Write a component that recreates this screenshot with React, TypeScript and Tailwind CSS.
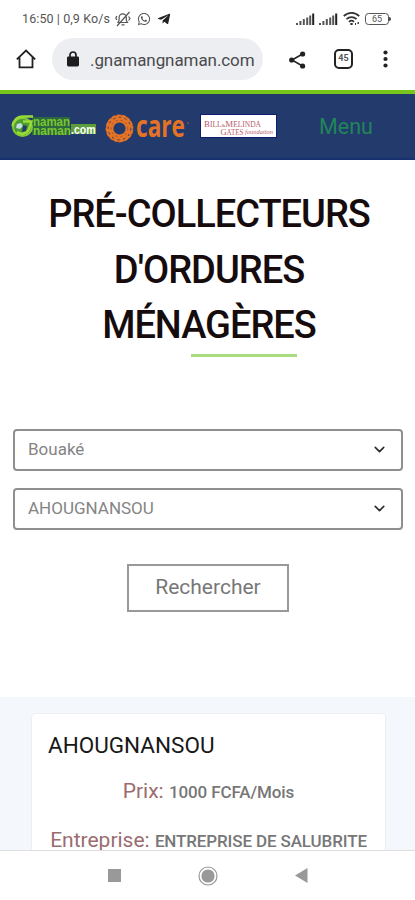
import { ChevronDown } from "lucide-react";
import { FaTelegramPlane, FaWhatsapp } from "react-icons/fa";

function Signal() {
  return (
    <svg width="19" height="13" viewBox="0 0 19 13" fill="#555">
      <rect x="0" y="10" width="2" height="2" />
      <rect x="3.4" y="8" width="2" height="4" />
      <rect x="6.8" y="6" width="2" height="6" />
      <rect x="10.2" y="4.5" width="2" height="7.5" />
      <rect x="13.2" y="2.5" width="2" height="9.5" />
      <rect x="16.2" y="0.5" width="2" height="11.5" fill="#222" />
    </svg>
  );
}

function StatusBar() {
  return (
    <div className="flex h-[38px] items-center pl-[22px] pr-[24px] text-[12.5px] text-[#555]">
      <span className="w-[90px] whitespace-nowrap tracking-[0.1px]">16:50 | 0,9 Ko/s</span>
      <svg className="ml-[3px]" width="17" height="16" viewBox="0 0 17 16" fill="none" stroke="#555" strokeWidth="1.2">
        <path d="M3 11.5h9.5l-1.2-2V6.5a3.6 3.6 0 0 0-7.2 0v3zM6.5 13.8h3M14.5 1 2 15M13.5 5.5l1.5 2-1.5 2M1.8 5 .8 7l1 2" />
      </svg>
      <FaWhatsapp className="ml-[5px]" size={14} />
      <FaTelegramPlane className="ml-[6px]" size={14} color="#222" />
      <div className="ml-auto flex items-center">
        <Signal />
        <span className="w-[4px]" />
        <Signal />
        <svg className="ml-[5px]" width="17" height="14" viewBox="0 0 17 14" fill="none" stroke="#333" strokeWidth="1.8">
          <path d="M.8 4.2C5-.2 12-.2 16.2 4.2M3.5 7.2c2.8-2.8 7.2-2.8 10 0M6 9.8c1.5-1.4 3.5-1.4 5 0" />
          <path d="M7.3 12h2.4M12 12h1M14.5 11h1.4" />
        </svg>
        <div className="ml-[5px] flex h-[12px] w-[24px] items-center justify-center rounded-[3.5px] border border-[#555] text-[9px] leading-none">
          65
        </div>
        <span className="h-[4px] w-[2px] rounded-r-sm bg-[#444]" />
      </div>
    </div>
  );
}

function BrowserBar() {
  return (
    <div className="flex h-[52px] items-start">
      <svg className="ml-[16px] mt-[11px]" width="20" height="20" viewBox="0 0 20 20" fill="none" stroke="#222" strokeWidth="1.8">
        <path d="M.8 10.4 10 1.5l9.2 8.9M3.5 8.4v9.9h13V8.4" />
      </svg>
      <div className="ml-[16px] flex h-[42px] w-[211px] items-center rounded-full bg-[#eceef2] pl-[15px]">
        <svg width="12" height="16" viewBox="0 0 12 16">
          <path d="M3 6V4a3 3 0 0 1 6 0v2" fill="none" stroke="#1d1d1f" strokeWidth="1.7" />
          <rect x="0" y="5.4" width="12" height="10" rx="1.4" fill="#1d1d1f" />
        </svg>
        <span className="ml-[11px] mt-[3px] text-[17px] tracking-[-0.08px] text-[#4a4a4c]">.gnamangnaman.com</span>
      </div>
      <svg className="ml-[26px] mt-[13px]" width="17" height="18" viewBox="0 0 17 18" fill="#222">
        <path d="M13.5 3 3 9l10.5 6" fill="none" stroke="#222" strokeWidth="1.5" />
        <circle cx="13.6" cy="3" r="2.6" />
        <circle cx="2.7" cy="9" r="2.6" />
        <circle cx="13.6" cy="15" r="2.6" />
      </svg>
      <div className="ml-[28px] mt-[11px] flex h-[20px] w-[19px] items-center justify-center rounded-[5px] border-2 border-[#222] text-[9px] font-bold text-[#555]">
        45
      </div>
      <svg className="ml-[30px] mt-[12px]" width="5" height="18" viewBox="0 0 5 18" fill="#222">
        <circle cx="2.5" cy="2.5" r="2.1" />
        <circle cx="2.5" cy="9" r="2.1" />
        <circle cx="2.5" cy="15.5" r="2.1" />
      </svg>
    </div>
  );
}

function GnamanLogo() {
  return (
    <svg className="overflow-visible" width="86" height="24" viewBox="0 0 86 24">
      <rect x="21" y="3" width="38" height="18" fill="#2c6840" />
      <rect x="60" y="10" width="25" height="10" fill="#5c9d3c" />
      <ellipse cx="11.5" cy="13" rx="9.5" ry="9" fill="#4c9c35" stroke="#84cb32" strokeWidth="2" />
      <path d="M22 2.5H12C6 2.5 2 7 1.5 12M12 7.5h8.5L18 15c-2 5-8 6-12 3" fill="none" stroke="#9bdb38" strokeWidth="2.4" />
      <path d="m6 10 4-1 2 3-3 3-4-1z" fill="#c3dde0" />
      <path d="m12 11 4 1-1 5-4 1z" fill="#263a69" />
      <g fontFamily="Liberation Sans" fontWeight="bold" fill="#7bc52f">
        <text x="22" y="11.5" fontSize="13" textLength="37" lengthAdjust="spacingAndGlyphs">naman</text>
        <text x="22" y="20.5" fontSize="13" textLength="38" lengthAdjust="spacingAndGlyphs">naman</text>
        <text x="60" y="19.5" fontSize="12.5" fill="#fff" textLength="24.5" lengthAdjust="spacingAndGlyphs">.com</text>
      </g>
    </svg>
  );
}

function CareLogo() {
  return (
    <svg className="overflow-visible" width="86" height="30" viewBox="0 0 86 30">
      <circle cx="14.5" cy="15.5" r="10" fill="none" stroke="#e57325" strokeWidth="7.8" />
      <circle cx="14.5" cy="15.5" r="11.3" fill="none" stroke="#263966" strokeWidth="0.9" strokeDasharray="2.4 3.4" />
      <circle cx="14.5" cy="15.5" r="8.3" fill="none" stroke="#8a5239" strokeWidth="0.9" strokeDasharray="2 3" />
      <circle cx="14.5" cy="15.5" r="13.8" fill="none" stroke="#263966" strokeWidth="1" strokeDasharray="1.5 4" />
      <text x="31" y="24" fontFamily="Open Sans" fontWeight="bold" fontSize="30" fill="#e57325" textLength="49" lengthAdjust="spacingAndGlyphs">
        care
      </text>
      <circle cx="83" cy="10" r="0.8" fill="#b76335" />
    </svg>
  );
}

function GatesLogo() {
  return (
    <svg width="75" height="22" viewBox="0 0 75 22" fontFamily="Liberation Serif" fill="#b55c6b">
      <rect width="75" height="22" fill="#fff" />
      <text x="3" y="11.5" fontSize="7.6" textLength="57" lengthAdjust="spacingAndGlyphs">
        <tspan fontSize="9">B</tspan>ILL<tspan fontSize="5">&amp;</tspan><tspan fontSize="9">M</tspan>ELINDA
      </text>
      <text x="19.5" y="19.5" fontSize="7.6" textLength="23" lengthAdjust="spacingAndGlyphs">
        <tspan fontSize="9">G</tspan>ATES
      </text>
      <text x="44" y="19" fontSize="5.6" fontStyle="italic" textLength="28" lengthAdjust="spacingAndGlyphs">foundation</text>
    </svg>
  );
}

function SiteHeader() {
  return (
    <header className="flex h-[70px] items-start border-b-2 border-t-4 border-b-[#173070] border-t-[#78c51c] bg-[#233a6d]">
      <div className="ml-[11px] mt-[20px]"><GnamanLogo /></div>
      <div className="ml-[8px] mt-[19px]"><CareLogo /></div>
      <div className="ml-[10px] mt-[21px] outline outline-[#101b72]"><GatesLogo /></div>
      <span className="ml-[43px] mt-[17px] text-[21.5px] leading-[32px] text-[#208657]">Menu</span>
    </header>
  );
}

function SelectBox({ value }: { value: string }) {
  return (
    <div className="flex h-[42px] items-center justify-between rounded-[4px] border-2 border-[#8f8f8f] pl-[13px] pr-[13px] text-[17px] text-[#858585]">
      <span>{value}</span>
      <ChevronDown size={17} strokeWidth={2.2} color="#292929" />
    </div>
  );
}

function NavBar() {
  return (
    <footer className="flex h-[50px] items-center justify-center gap-[77px] border-t border-[#dedede] bg-white">
      <span className="size-[13px] bg-[#999]" />
      <svg width="20" height="20" viewBox="0 0 20 20">
        <circle cx="10" cy="10" r="9" fill="#fff" stroke="#999" strokeWidth="1.2" />
        <circle cx="10" cy="10" r="6.6" fill="#999" />
      </svg>
      <svg width="13" height="15" viewBox="0 0 13 15">
        <path d="M12.5 0v15L0 7.5z" fill="#999" />
      </svg>
    </footer>
  );
}

export default function App() {
  return (
    <div className="flex h-[900px] w-[415px] flex-col overflow-hidden bg-white font-['Roboto',sans-serif]">
      <StatusBar />
      <BrowserBar />
      <SiteHeader />

      <main className="min-h-0 flex-1 overflow-hidden">
        <h1 className="pl-[3px] pt-[27px] text-center text-[38px] font-medium leading-[55.5px] tracking-[-1px] text-[#160c0d]">
          PRÉ-COLLECTEURS
          <br />
          D'ORDURES
          <br />
          MÉNAGÈRES
        </h1>
        <div className="ml-[191px] h-[3px] w-[106px] bg-[#a9dc7c]" />

        <div className="mt-[72px] flex flex-col gap-[17px] pl-[13px] pr-[12px]">
          <SelectBox value="Bouaké" />
          <SelectBox value="AHOUGNANSOU" />
        </div>
        <button className="ml-[127px] mt-[34px] block h-[48px] w-[162px] border-2 border-[#999] text-[21px] text-[#777]">
          Rechercher
        </button>

        <section className="mt-[85px] h-[160px] bg-[#f4f8fc] pl-[31px] pr-[29px] pt-[16px]">
          <div className="h-[160px] rounded-[4px] border border-[#eceeef] bg-white pt-[14px]">
            <h2 className="pl-[16px] text-[22.5px] leading-[34px] text-[#181818]">AHOUGNANSOU</h2>
            <p className="mt-[12px] text-center text-[21px] leading-[34px] text-[#9b6c70]">
              Prix: <b className="text-[17px] font-medium tracking-[-0.1px] text-[#777]">1000 FCFA/Mois</b>
            </p>
            <p className="mt-[14px] whitespace-nowrap text-center text-[21px] leading-[34px] text-[#9b6c70]">
              Entreprise: <b className="text-[17px] font-medium tracking-[-0.13px] text-[#777]">ENTREPRISE DE SALUBRITE</b>
            </p>
          </div>
        </section>
      </main>

      <NavBar />
    </div>
  );
}
